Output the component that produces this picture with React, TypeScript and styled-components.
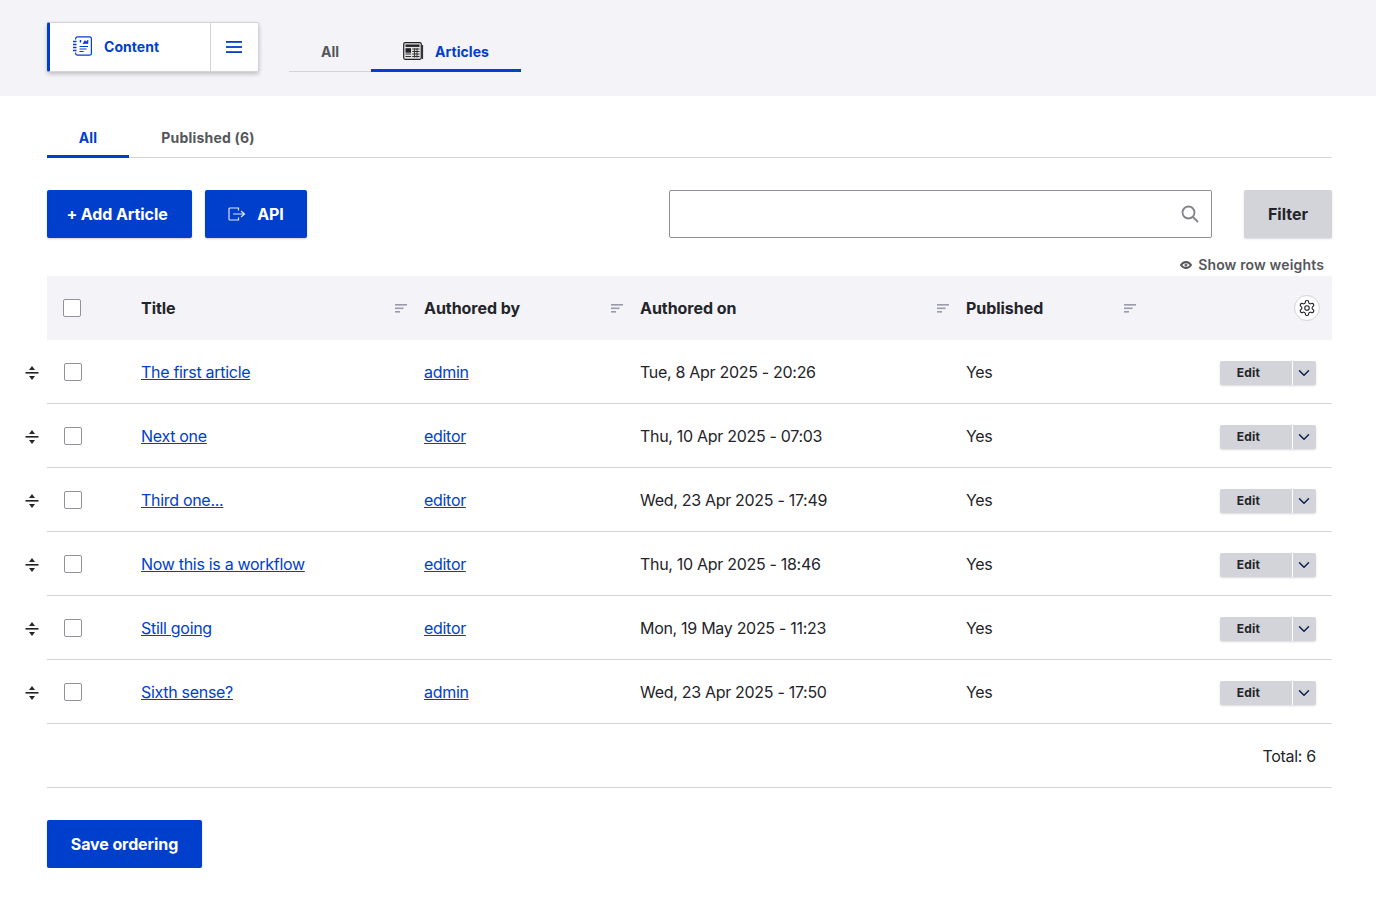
import React from 'react';
import styled, { createGlobalStyle } from 'styled-components';
import { LuChevronDown, LuSettings } from 'react-icons/lu';

const GlobalStyle = createGlobalStyle`
  * { box-sizing: border-box; }
  html, body { margin: 0; padding: 0; background: #fff; }
  body {
    font-family: Inter, "Liberation Sans", sans-serif;
    color: #232429;
    font-size: 16px;
  }
`;

const blue = '#003ecc';
const columns = '94px 283px 216px 326px 187px 1fr';

const TopBand = styled.header`
  height: 96px;
  background: #f3f3f8;
  padding: 22px 44px 0 47px;
  display: flex;
  align-items: flex-start;
`;

const MenuCard = styled.div`
  width: 212px;
  height: 50px;
  display: flex;
  background: #fff;
  border: 1px solid #d3d4d9;
  border-left: 3px solid ${blue};
  border-radius: 2px;
  box-shadow: 0 2px 4px rgba(0, 0, 0, 0.22);
`;

const MenuLink = styled.div`
  flex: 1;
  display: flex;
  align-items: center;
  gap: 12px;
  padding: 0 0 2px 22px;
  font-size: 14px;
  font-weight: 700;
  letter-spacing: 0.05px;
  color: ${blue};
`;

const MenuToggle = styled.div`
  width: 48px;
  border-left: 1px solid #d3d4d9;
  padding-right: 1px;
  display: flex;
  align-items: center;
  justify-content: center;
`;

const SecondaryTabs = styled.nav`
  margin-left: 30px;
  height: 50px;
  display: flex;
`;

const SecondaryTab = styled.div<{ $active?: boolean; $width: number }>`
  width: ${({ $width }) => $width}px;
  height: 50px;
  padding-top: ${({ $active }) => ($active ? '11px' : '9px')};
  display: flex;
  align-items: center;
  justify-content: center;
  gap: 11px;
  font-size: 14px;
  font-weight: 700;
  letter-spacing: 0.05px;
  color: ${({ $active }) => ($active ? blue : '#55565b')};
  border-bottom: ${({ $active }) => ($active ? `3px solid ${blue}` : '1px solid #d3d4d9')};
`;

const Main = styled.main`
  padding: 24px 44px 0 47px;
`;

const PrimaryTabs = styled.nav`
  height: 38px;
  display: flex;
  border-bottom: 1px solid #d3d4d9;
`;

const PrimaryTab = styled.div<{ $active?: boolean; $width: number }>`
  width: ${({ $width }) => $width}px;
  height: 38px;
  padding-bottom: ${({ $active }) => ($active ? '0' : '3px')};
  display: flex;
  align-items: center;
  justify-content: center;
  font-size: 14px;
  font-weight: 700;
  letter-spacing: 0.2px;
  color: ${({ $active }) => ($active ? blue : '#55565b')};
  border-bottom: ${({ $active }) => ($active ? `3px solid ${blue}` : 'none')};
`;

const Toolbar = styled.div`
  margin-top: 32px;
  display: flex;
  align-items: center;
`;

const PrimaryButton = styled.button<{ $width: number; $gap?: number; $shift?: number }>`
  width: ${({ $width }) => $width}px;
  height: 48px;
  margin-right: 13px;
  padding: 0 ${({ $shift }) => $shift ?? 0}px 0 0;
  display: flex;
  align-items: center;
  justify-content: center;
  gap: ${({ $gap }) => $gap ?? 0}px;
  border: none;
  border-radius: 2px;
  background: ${blue};
  color: #fff;
  font: 700 16px Inter, "Liberation Sans", sans-serif;
  letter-spacing: -0.1px;
  box-shadow: 0 1px 2px rgba(0, 0, 0, 0.2);
`;

const SearchBox = styled.div`
  margin-left: auto;
  width: 543px;
  height: 48px;
  border: 1px solid #919297;
  border-radius: 2px;
  display: flex;
  align-items: center;
  justify-content: flex-end;
  padding-right: 12px;
`;

const FilterButton = styled.button`
  margin-left: 32px;
  width: 88px;
  height: 48px;
  border: none;
  border-radius: 2px;
  background: #d3d4d9;
  color: #232429;
  font: 700 16px Inter, "Liberation Sans", sans-serif;
  box-shadow: 0 1px 2px rgba(0, 0, 0, 0.15);
`;

const WeightsRow = styled.div`
  height: 38px;
  display: flex;
  align-items: center;
  justify-content: flex-end;
  gap: 6px;
  padding: 15px 8px 0 0;
  font-size: 14px;
  font-weight: 600;
  letter-spacing: 0.15px;
  color: #55565b;
`;

const HeadRow = styled.div`
  height: 64px;
  display: grid;
  grid-template-columns: ${columns};
  align-items: center;
  background: #f3f3f8;
  font-weight: 700;
  letter-spacing: -0.05px;
`;

const HeadCell = styled.div`
  display: flex;
  align-items: center;
  justify-content: space-between;
  padding-right: 17px;
`;

const SelectCell = styled.div<{ $inset: number }>`
  display: flex;
  align-items: center;
  padding-left: ${({ $inset }) => $inset}px;
`;

const Handle = styled.span`
  width: 14px;
  height: 16px;
  margin: 2px 25px 0 -39px;
  display: flex;
`;

const Check = styled.span`
  width: 18px;
  height: 18px;
  background: #fff;
  border: 1px solid #919297;
  border-radius: 2px;
`;

const SettingsCell = styled.div`
  display: flex;
  justify-content: flex-end;
  padding-right: 12px;
`;

const SettingsCircle = styled.span`
  width: 26px;
  height: 26px;
  border-radius: 50%;
  background: #fff;
  border: 1px solid #d3d4d9;
  display: flex;
  align-items: center;
  justify-content: center;
  color: #232429;
`;

const Row = styled.div`
  height: 64px;
  display: grid;
  grid-template-columns: ${columns};
  align-items: center;
  border-bottom: 1px solid #d3d4d9;
  letter-spacing: -0.3px;
`;

const TableLink = styled.a`
  color: ${blue};
  text-decoration: underline;
  cursor: pointer;
`;

const RowActions = styled.div`
  display: flex;
  justify-content: flex-end;
  padding: 2px 16px 0 0;
  letter-spacing: 0;
`;

const DropButton = styled.div`
  width: 96px;
  height: 24px;
  display: flex;
  background: #d3d4d9;
  border-radius: 2px;
  box-shadow: 0 1px 2px rgba(0, 0, 0, 0.15);
`;

const EditLabel = styled.span`
  flex: 1;
  display: flex;
  align-items: center;
  justify-content: center;
  padding-right: 15px;
  font-size: 12px;
  font-weight: 700;
  letter-spacing: 0.25px;
  color: #232429;
`;

const DropToggle = styled.span`
  width: 24px;
  border-left: 1px solid #fff;
  padding-right: 1px;
  display: flex;
  align-items: center;
  justify-content: center;
  color: #0f1f50;
`;

const TotalRow = styled.div`
  height: 64px;
  display: flex;
  align-items: center;
  justify-content: flex-end;
  padding-right: 16px;
  border-bottom: 1px solid #d3d4d9;
  letter-spacing: -0.3px;
`;

const SaveButton = styled(PrimaryButton)`
  margin-top: 32px;
`;

const ContentIcon = () => (
  <svg width="20" height="20" viewBox="0 0 20 20" fill="none" stroke={blue} strokeWidth="1.2">
    <path d="M3.600 3.500V2.800A2 2 0 0 1 5.600 0.800h12A1.800 1.800 0 0 1 19.400 2.600v14.800a1.800 1.800 0 0 1-1.800 1.800h-12a2 2 0 0 1-2-2v-0.700" />
    <path d="M1 5.500h3.500M1 8.500h3.500M1 11.500h3.500M1 14.500h3.500" strokeWidth="1.300" />
    <path d="M7.500 10.500h8.500M7.500 13h7M7.500 15.500h4" />
    <path d="M8.500 4v2.500" strokeWidth="1.500" />
    <path d="M11 7.500l2-3 1.500 1.500 1.500-2v3.500z" fill={blue} strokeWidth="0.600" />
  </svg>
);

const Burger = () => (
  <svg width="16" height="12" viewBox="0 0 16 12" fill={blue}>
    <rect y="0" width="16" height="1.800" />
    <rect y="5.100" width="16" height="1.800" />
    <rect y="10.200" width="16" height="1.800" />
  </svg>
);

const NewspaperIcon = () => (
  <svg width="21" height="18" viewBox="0 0 21 18">
    <rect x="0.700" y="0.700" width="17.600" height="16.600" rx="1.500" fill="#e4e4e4" stroke="#222" strokeWidth="1.200" />
    <path d="M19.500 3v14" stroke="#333" strokeWidth="1.200" />
    <rect x="2.500" y="2.500" width="14" height="2.400" fill="#222" />
    <rect x="2.500" y="6.200" width="5.500" height="4.500" fill="#222" />
    <path d="M9.200 7h7.300M9.200 9.500h7.300M9.200 12h7.300M9.200 14.500h7.300M2.500 12h5.500M2.500 14.500h5.500M11.600 6.200v9.300M14 6.200v9.300" stroke="#333" strokeWidth="1" />
  </svg>
);

const ApiIcon = () => (
  <svg width="18" height="14" viewBox="0 0 18 14" fill="none" stroke="#dfe6f8" strokeWidth="1.200">
    <path d="M10.500 3.500V1H2a1 1 0 0 0-1 1v10a1 1 0 0 0 1 1h8.500v-2.500" />
    <path d="M5 7h11.500M13 4l3.500 3-3.500 3" />
  </svg>
);

const SearchIcon = () => (
  <svg width="18" height="18" viewBox="0 0 18 18" fill="none" stroke="#828388" strokeWidth="1.800">
    <circle cx="7.500" cy="7.500" r="6" />
    <path d="M12 12l5 5" />
  </svg>
);

const EyeIcon = () => (
  <svg width="12" height="8" viewBox="0 0 12 8" fill="none" stroke="#55565b" strokeWidth="2">
    <path d="M1 4c1.400-2 3-3 5-3s3.600 1 5 3c-1.400 2-3 3-5 3S2.400 6 1 4z" />
    <circle cx="6" cy="4" r="0.500" fill="#55565b" />
  </svg>
);

const SortIcon = () => (
  <svg width="12" height="9" viewBox="0 0 12 9" fill="#9a9bab">
    <rect width="12" height="1.600" />
    <rect y="3.500" width="8.500" height="1.600" />
    <rect y="7" width="5" height="1.600" />
  </svg>
);

const DragIcon = () => (
  <svg width="14" height="16" viewBox="0 0 14 16" fill="#232429">
    <path d="M7 1l3 4H4z" />
    <rect x="0.500" y="7" width="13" height="1.600" />
    <path d="M7 15l3-4H4z" />
  </svg>
);

const rows = [
  { title: 'The first article', author: 'admin', date: 'Tue, 8 Apr 2025 - 20:26' },
  { title: 'Next one', author: 'editor', date: 'Thu, 10 Apr 2025 - 07:03' },
  { title: 'Third one...', author: 'editor', date: 'Wed, 23 Apr 2025 - 17:49' },
  { title: 'Now this is a workflow', author: 'editor', date: 'Thu, 10 Apr 2025 - 18:46' },
  { title: 'Still going', author: 'editor', date: 'Mon, 19 May 2025 - 11:23' },
  { title: 'Sixth sense?', author: 'admin', date: 'Wed, 23 Apr 2025 - 17:50' },
];

const App: React.FC = () => (
  <>
    <GlobalStyle />
    <TopBand>
      <MenuCard>
        <MenuLink>
          <ContentIcon />
          Content
        </MenuLink>
        <MenuToggle>
          <Burger />
        </MenuToggle>
      </MenuCard>
      <SecondaryTabs>
        <SecondaryTab $width={82}>All</SecondaryTab>
        <SecondaryTab $width={150} $active>
          <NewspaperIcon />
          Articles
        </SecondaryTab>
      </SecondaryTabs>
    </TopBand>
    <Main>
      <PrimaryTabs>
        <PrimaryTab $width={82} $active>All</PrimaryTab>
        <PrimaryTab $width={158}>Published (6)</PrimaryTab>
      </PrimaryTabs>
      <Toolbar>
        <PrimaryButton $width={145} $shift={5}>+ Add Article</PrimaryButton>
        <PrimaryButton $width={102} $gap={11}>
          <ApiIcon />
          API
        </PrimaryButton>
        <SearchBox>
          <SearchIcon />
        </SearchBox>
        <FilterButton>Filter</FilterButton>
      </Toolbar>
      <WeightsRow>
        <EyeIcon />
        Show row weights
      </WeightsRow>
      <HeadRow>
        <SelectCell $inset={16}>
          <Check />
        </SelectCell>
        <HeadCell>Title<SortIcon /></HeadCell>
        <HeadCell>Authored by<SortIcon /></HeadCell>
        <HeadCell>Authored on<SortIcon /></HeadCell>
        <HeadCell>Published<SortIcon /></HeadCell>
        <SettingsCell>
          <SettingsCircle>
            <LuSettings size={18} strokeWidth={1.500} />
          </SettingsCircle>
        </SettingsCell>
      </HeadRow>
      {rows.map((row) => (
        <Row key={row.title}>
          <SelectCell $inset={17}>
            <Handle>
              <DragIcon />
            </Handle>
            <Check />
          </SelectCell>
          <div><TableLink>{row.title}</TableLink></div>
          <div><TableLink>{row.author}</TableLink></div>
          <div>{row.date}</div>
          <div>Yes</div>
          <RowActions>
            <DropButton>
              <EditLabel>Edit</EditLabel>
              <DropToggle>
                <LuChevronDown size={18} strokeWidth={2} />
              </DropToggle>
            </DropButton>
          </RowActions>
        </Row>
      ))}
      <TotalRow>Total: 6</TotalRow>
      <SaveButton $width={155}>Save ordering</SaveButton>
    </Main>
  </>
);

export default App;
